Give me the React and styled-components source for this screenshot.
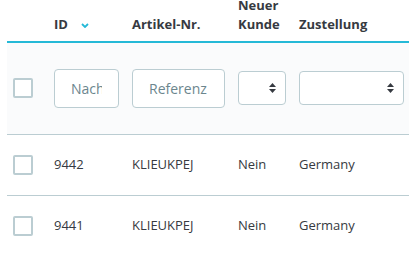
import React from 'react';
import styled, { createGlobalStyle } from 'styled-components';

const Global = createGlobalStyle`
  body {
    margin: 0;
    overflow: hidden;
    background: #fff;
    font-family: "Open Sans", "Noto Sans", sans-serif;
    color: #363a41;
  }
`

const Wrap = styled.div`
  margin-top: -4px;
  padding-left: 7px;
  overflow: hidden;
`

const Table = styled.table`
  border-collapse: collapse;
  table-layout: fixed;
  width: 430px;
`

const TH = styled.th`
  width: ${p => p.w ? p.w + 'px' : 'auto'};
  text-align: left;
  vertical-align: bottom;
  padding: 0 0 7px ${p => p.first ? '6px' : '0'};
  font-size: 13px;
  font-weight: 700;
  line-height: 19px;
  border-bottom: 2px solid #25b9d7;
  white-space: nowrap;
`

const FilterRow = styled.tr`
  background: #fafbfc;
  height: 92px;
  border-bottom: 1px solid #bbcdd2;
`

const Row = styled.tr`
  height: 61px;
  border-bottom: ${p => p.last ? 'none' : '1px solid #bbcdd2'};
`

const TD = styled.td`
  padding: 0 0 0 ${p => p.first ? '6px' : '0'};
  vertical-align: middle;
  font-size: 13px;
  line-height: 19px;
  white-space: nowrap;
`

const Check = styled.div`
  width: 20px;
  height: 20px;
  box-sizing: border-box;
  border: 2px solid #bbcdd2;
  border-radius: 2px;
  background: #fff;
`

const Input = styled.input`
  display: block;
  width: ${p => p.w}px;
  height: 39px;
  box-sizing: border-box;
  border: 1px solid #bbcdd2;
  border-radius: 4px;
  padding: 0 16px;
  font-family: "Open Sans", sans-serif;
  font-size: 14px;
  color: #363a41;
  background: #fff;
  outline: none;
  &::placeholder {
    color: #6c868e;
  }
`

const SelectBox = styled.div`
  position: relative;
  width: ${p => p.w}px;
  height: 34px;
`

const Select = styled.select`
  appearance: none;
  width: 100%;
  height: 100%;
  box-sizing: border-box;
  border: 1px solid #bbcdd2;
  border-radius: 4px;
  background: #fff;
  font-family: "Open Sans", sans-serif;
  font-size: 13px;
  outline: none;
`

const Arrows = styled.svg`
  position: absolute;
  right: 10px;
  top: 12px;
  pointer-events: none;
`

const Chevron = styled.svg`
  margin-left: 13px;
  vertical-align: 1px;
`

const UpDown = () => (
  <Arrows width="7" height="10" viewBox="0 0 7 10">
    <path d="M3.5 0 L7 4 L0 4 Z M0 6 L7 6 L3.5 10 Z" fill="#363a41" />
  </Arrows>
)

const orders = [
  { id: 9442, ref: 'KLIEUKPEJ', neu: 'Nein', land: 'Germany' },
  { id: 9441, ref: 'KLIEUKPEJ', neu: 'Nein', land: 'Germany' }
]

export default function App() {
  return (
    <Wrap>
      <Global />
      <Table>
        <thead>
          <tr>
            <TH w={41} first></TH>
            <TH w={78}>
              ID
              <Chevron width="8" height="5" viewBox="0 0 8 5">
                <path d="M1 1 L4 4 L7 1" fill="none" stroke="#25b9d7" strokeWidth="1.8" />
              </Chevron>
            </TH>
            <TH w={106}>Artikel-Nr.</TH>
            <TH w={61}>Neuer<br />Kunde</TH>
            <TH>Zustellung</TH>
          </tr>
        </thead>
        <tbody>
          <FilterRow>
            <TD first><Check /></TD>
            <TD><Input w={65} placeholder="Nach ID suchen" /></TD>
            <TD><Input w={93} placeholder="Referenz suchen" /></TD>
            <TD>
              <SelectBox w={48}>
                <Select><option></option></Select>
                <UpDown />
              </SelectBox>
            </TD>
            <TD>
              <SelectBox w={105}>
                <Select><option></option></Select>
                <UpDown />
              </SelectBox>
            </TD>
          </FilterRow>
          {orders.map((o, i) => (
            <Row key={o.id} last={i === orders.length - 1}>
              <TD first><Check /></TD>
              <TD>{o.id}</TD>
              <TD>{o.ref}</TD>
              <TD>{o.neu}</TD>
              <TD>{o.land}</TD>
            </Row>
          ))}
        </tbody>
      </Table>
    </Wrap>
  );
}
